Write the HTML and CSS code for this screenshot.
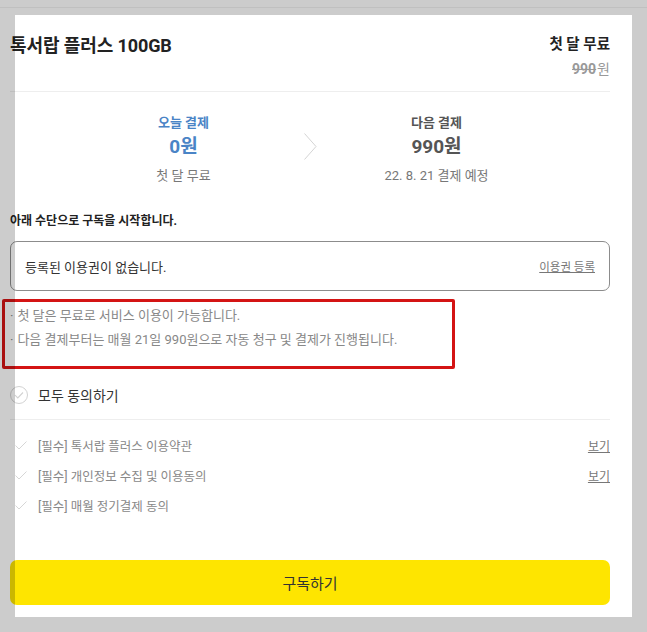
FILE: index.html
```html
<!DOCTYPE html>
<html lang="ko">
<head>
    <meta charset="UTF-8">
    <meta name="viewport" content="width=device-width, initial-scale=1.0">
    <title>톡서랍 플러스 구독</title>
    <link rel="stylesheet" href="styles.css">
</head>
<body>
    <div class="sheet">
        <header class="product">
            <h1>톡서랍 플러스 100GB</h1>
            <div class="price">
                <strong>첫 달 무료</strong>
                <span class="old"><del>990</del>원</span>
            </div>
        </header>

        <section class="summary">
            <div class="pay today">
                <p class="label">오늘 결제</p>
                <p class="amount">0원</p>
                <p class="desc">첫 달 무료</p>
            </div>
            <svg class="chevron" width="13" height="27" viewBox="0 0 13 27">
                <polyline points="0.5,0.5 12,13.5 0.5,26.5" fill="none" stroke="#d4d4d4" stroke-width="1"/>
            </svg>
            <div class="pay next">
                <p class="label">다음 결제</p>
                <p class="amount">990원</p>
                <p class="desc">22. 8. 21 결제 예정</p>
            </div>
        </section>

        <p class="intro">아래 수단으로 구독을 시작합니다.</p>

        <div class="voucher">
            <span>등록된 이용권이 없습니다.</span>
            <a href="#">이용권 등록</a>
        </div>

        <ul class="notes">
            <li>첫 달은 무료로 서비스 이용이 가능합니다.</li>
            <li>다음 결제부터는 매월 21일 990원으로 자동 청구 및 결제가 진행됩니다.</li>
        </ul>

        <div class="agree-all">
            <svg class="circle-check" width="18" height="18" viewBox="0 0 18 18">
                <circle cx="9" cy="9" r="8.5" fill="none" stroke="#d2d2d2"/>
                <polyline points="5,9.2 7.8,12 13,6.5" fill="none" stroke="#d2d2d2" stroke-width="1.1"/>
            </svg>
            <span>모두 동의하기</span>
        </div>

        <ul class="terms">
            <li>
                <svg class="check" width="12" height="9" viewBox="0 0 12 9"><polyline points="0.5,4.5 4,8 11.5,0.5" fill="none" stroke="#d6d6d6"/></svg>
                <span>[필수] 톡서랍 플러스 이용약관</span>
                <a href="#">보기</a>
            </li>
            <li>
                <svg class="check" width="12" height="9" viewBox="0 0 12 9"><polyline points="0.5,4.5 4,8 11.5,0.5" fill="none" stroke="#d6d6d6"/></svg>
                <span>[필수] 개인정보 수집 및 이용동의</span>
                <a href="#">보기</a>
            </li>
            <li>
                <svg class="check" width="12" height="9" viewBox="0 0 12 9"><polyline points="0.5,4.5 4,8 11.5,0.5" fill="none" stroke="#d6d6d6"/></svg>
                <span>[필수] 매월 정기결제 동의</span>
            </li>
        </ul>

        <button class="subscribe">구독하기</button>
    </div>

    <div class="frame"></div>
</body>
</html>
```

FILE: styles.css
```css
body {
    font-family: Roboto, "Noto Sans CJK KR", sans-serif;
    background-color: #fff;
    color: #333;
    margin: 0;
    padding: 0;
    overflow: hidden;
}

p, ul, h1 {
    margin: 0;
    padding: 0;
}

ul {
    list-style: none;
}

.sheet {
    width: 600px;
    margin-left: 10px;
    padding-top: 33px;
}

.product {
    display: flex;
    justify-content: space-between;
    align-items: flex-start;
    padding-bottom: 10px;
    border-bottom: 1px solid #eee;
}

.product h1 {
    font-size: 18px;
    line-height: 26px;
    font-weight: 700;
    color: #222;
    letter-spacing: -0.1px;
}

.price {
    display: flex;
    flex-direction: column;
    align-items: flex-end;
    font-size: 14px;
    line-height: 24px;
}

.price strong {
    font-size: 14.5px;
    color: #222;
}

.price .old {
    color: #999;
}

.price del {
    font-weight: 700;
    margin-right: 1px;
}

.summary {
    display: flex;
    justify-content: center;
    gap: 40px;
    padding-top: 21px;
}

.pay {
    width: 160px;
    text-align: center;
}

.pay .label {
    font-size: 13px;
    line-height: 20px;
    font-weight: 700;
    color: #555;
}

.pay .amount {
    font-size: 19px;
    line-height: 24px;
    font-weight: 700;
    margin-top: 2px;
    color: #555;
}

.pay .desc {
    font-size: 13px;
    line-height: 20px;
    margin-top: 7px;
    color: #777;
}

.next .desc {
    font-size: 13px;
}

.today .label,
.today .amount {
    color: #4a84c6;
}

.chevron {
    display: block;
    margin-top: 20px;
}

.intro {
    margin-top: 25px;
    font-size: 12px;
    line-height: 20px;
    font-weight: 700;
    color: #222;
}

.voucher {
    margin-top: 10px;
    height: 50px;
    box-sizing: border-box;
    border: 1px solid #8c8c8c;
    border-radius: 7px;
    padding: 0 14px;
    display: flex;
    justify-content: space-between;
    align-items: center;
    font-size: 13px;
}

.voucher a {
    font-size: 11.5px;
    color: #777;
}

.notes {
    margin: 8px 0 0 -8px;
    width: 453px;
    box-sizing: border-box;
    border: 3px solid #d41414;
    border-radius: 2px;
    padding: 2px 0 14px 5px;
    font-size: 13px;
    line-height: 24px;
    color: #888;
}

.notes li::before {
    content: "·";
    margin-right: 4px;
}

.agree-all {
    display: flex;
    align-items: center;
    gap: 10px;
    margin-top: 16px;
    padding: 0 0 14px 0;
    height: 20px;
    border-bottom: 1px solid #eee;
    font-size: 14px;
    color: #333;
}

.terms {
    margin-top: 15px;
    display: flex;
    flex-direction: column;
    gap: 10px;
}

.terms li {
    display: flex;
    align-items: center;
    height: 20px;
    font-size: 12.5px;
    color: #888;
}

.check {
    margin: 0 11px 0 5px;
}

.terms span {
    flex: 1;
}

.terms a {
    font-size: 12px;
    color: #777;
}

.subscribe {
    display: block;
    width: 100%;
    height: 45px;
    margin-top: 45px;
    border: none;
    border-radius: 7px;
    background-color: #fee500;
    font-family: inherit;
    font-size: 15px;
    color: #333;
    cursor: pointer;
}

/* dimmed screen edge over the sheet */
.frame {
    position: fixed;
    inset: 0;
    border-style: solid;
    border-color: rgba(0, 0, 0, 0.2);
    border-width: 15px 15px 15px 15px;
    pointer-events: none;
}

.frame::before {
    content: "";
    position: absolute;
    top: -8px;
    left: -15px;
    right: -15px;
    height: 1px;
    background: rgba(0, 0, 0, 0.06);
}
```
